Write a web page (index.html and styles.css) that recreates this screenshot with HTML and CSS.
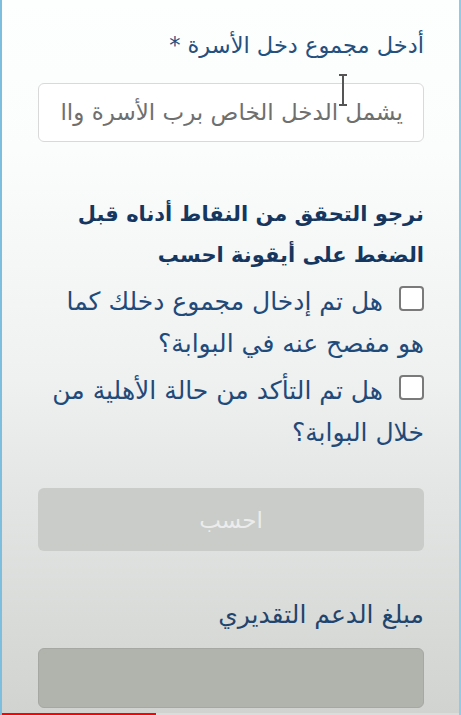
FILE: index.html
```html
<!DOCTYPE html>
<html lang="ar">
<head>
<meta charset="utf-8">
<link rel="stylesheet" href="styles.css">
</head>
<body>
<div class="frame">
  <main class="form" dir="rtl">
    <label class="field-label">أدخل مجموع دخل الأسرة *</label>
    <div class="input-wrap">
      <div class="text-input">يشمل الدخل الخاص برب الأسرة واا</div>
      <svg class="ibeam" width="10" height="32" viewBox="0 0 10 32"><path d="M1 1H9M5 1V31M1 31H9" stroke="#555" stroke-width="2" fill="none"/></svg>
    </div>
    <h2 class="notice">نرجو التحقق من النقاط أدناه قبل<br>الضغط على أيقونة احسب</h2>
    <p class="check"><span class="box"></span>هل تم إدخال مجموع دخلك كما<br>هو مفصح عنه في البوابة؟</p>
    <p class="check"><span class="box"></span>هل تم التأكد من حالة الأهلية من<br>خلال البوابة؟</p>
    <button class="calc" type="button">احسب</button>
    <label class="field-label result-label">مبلغ الدعم التقديري</label>
    <div class="result-box"></div>
  </main>
  <div class="progress"><div class="played" style="width:154px"></div></div>
</div>
</body>
</html>
```
FILE: styles.css
```css
html, body {
  margin: 0;
  padding: 0;
}
body {
  width: 461px;
  height: 715px;
  overflow: hidden;
  font-family: "DejaVu Sans", sans-serif;
}
.frame {
  width: 461px;
  height: 715px;
  box-sizing: border-box;
  border-left: 2px solid #7dbedf;
  border-right: 2px solid #8ccbe9;
  background: linear-gradient(to bottom, #fdfefe 0, #fbfdfd 150px, #eef1f0 380px, #e2e5e3 500px, #d8dbd8 620px, #d0d3cf 713px);
  display: flex;
  flex-direction: column;
}
.form {
  flex: 1;
  padding: 25px 35px 0 36px;
  display: flex;
  flex-direction: column;
}
.field-label {
  display: block;
  font-size: 22.5px;
  line-height: 40px;
  color: #24507f;
}
.input-wrap {
  position: relative;
  margin-top: 18px;
}
.text-input {
  height: 57px;
  border: 1px solid #d9d9d9;
  border-radius: 6px;
  background: #fff;
  padding: 0 20px;
  font-size: 23px;
  line-height: 57px;
  color: #6f6f6f;
  white-space: nowrap;
  overflow: hidden;
}
.ibeam {
  position: absolute;
  top: -9px;
  left: 300px;
}
.notice {
  margin: 52px 0 0;
  font-size: 21px;
  font-weight: bold;
  line-height: 41px;
  color: #15375f;
  white-space: nowrap;
}
.check {
  margin: 5px 0 0;
  font-size: 25px;
  line-height: 42px;
  color: #1f4a7a;
  white-space: nowrap;
}
.box {
  display: inline-block;
  width: 21px;
  height: 21px;
  border: 2px solid #7a7a7a;
  border-radius: 4px;
  background: #fff;
  margin-left: 16px;
  vertical-align: -1px;
}
.calc {
  margin-top: 34px;
  height: 63px;
  border: none;
  border-radius: 6px;
  background: #c9ccc8;
  color: #ececec;
  font-family: inherit;
  font-size: 23px;
}
.result-label {
  margin-top: 44px;
  font-size: 25px;
  color: #1f456e;
}
.result-box {
  margin-top: 13px;
  height: 58px;
  border: 1px solid #a6a9a3;
  border-radius: 6px;
  background: #b1b4ad;
}
.progress {
  height: 2px;
  background: #dcdcdc;
}
.played {
  height: 2px;
  background: #f00;
}
```
